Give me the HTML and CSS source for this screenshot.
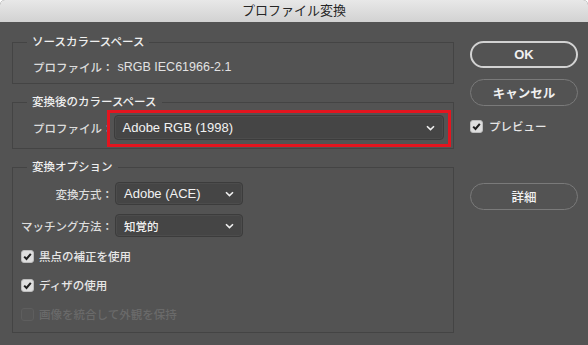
FILE: index.html
```html
<!DOCTYPE html>
<html>
<head>
    <title>プロファイル変換</title>
    <link rel="stylesheet" href="styles.css">
</head>
<body>
    <div class="dialog">
        <div class="titlebar">プロファイル変換</div>

        <div class="dialog-body">
            <div class="main">
                <fieldset class="group">
                    <legend>ソースカラースペース</legend>
                    <div class="group-body source-body">
                        <span class="label">プロファイル：</span>
                        <span class="value">sRGB IEC61966-2.1</span>
                    </div>
                </fieldset>

                <fieldset class="group">
                    <legend>変換後のカラースペース</legend>
                    <div class="group-body dest-body">
                        <span class="label">プロファイル：</span>
                        <div class="highlight">
                            <div class="select select-wide">
                                <span>Adobe RGB (1998)</span>
                                <svg class="chevron" width="9" height="6" viewBox="0 0 9 6"><path d="M1 1.2 L4.5 4.6 L8 1.2" fill="none" stroke="#f0f0f0" stroke-width="1.6"/></svg>
                            </div>
                        </div>
                    </div>
                </fieldset>

                <fieldset class="group">
                    <legend>変換オプション</legend>
                    <div class="group-body options-body">
                        <div class="option-grid">
                            <span class="label">変換方式：</span>
                            <div class="select">
                                <span>Adobe (ACE)</span>
                                <svg class="chevron" width="9" height="6" viewBox="0 0 9 6"><path d="M1 1.2 L4.5 4.6 L8 1.2" fill="none" stroke="#f0f0f0" stroke-width="1.6"/></svg>
                            </div>
                            <span class="label">マッチング方法：</span>
                            <div class="select">
                                <span class="ja">知覚的</span>
                                <svg class="chevron" width="9" height="6" viewBox="0 0 9 6"><path d="M1 1.2 L4.5 4.6 L8 1.2" fill="none" stroke="#f0f0f0" stroke-width="1.6"/></svg>
                            </div>
                        </div>

                        <div class="check-row">
                            <span class="check on">
                                <svg width="11" height="11" viewBox="0 0 11 11"><path d="M2.2 5.6 L4.5 8 L8.8 2.8" fill="none" stroke="#1e1e1e" stroke-width="2"/></svg>
                            </span>
                            黒点の補正を使用
                        </div>
                        <div class="check-row">
                            <span class="check on">
                                <svg width="11" height="11" viewBox="0 0 11 11"><path d="M2.2 5.6 L4.5 8 L8.8 2.8" fill="none" stroke="#1e1e1e" stroke-width="2"/></svg>
                            </span>
                            ディザの使用
                        </div>
                        <div class="check-row disabled">
                            <span class="check"></span>
                            画像を統合して外観を保持
                        </div>
                    </div>
                </fieldset>
            </div>

            <div class="side">
                <button class="btn btn-default">OK</button>
                <button class="btn">キャンセル</button>
                <div class="check-row preview">
                    <span class="check on">
                        <svg width="11" height="11" viewBox="0 0 11 11"><path d="M2.2 5.6 L4.5 8 L8.8 2.8" fill="none" stroke="#1e1e1e" stroke-width="2"/></svg>
                    </span>
                    プレビュー
                </div>
                <button class="btn btn-more">詳細</button>
            </div>
        </div>
    </div>
</body>
</html>
```

FILE: styles.css
```css
body {
    margin: 0;
    background-color: #ffffff;
    font-family: 'Liberation Sans', 'Noto Sans CJK JP', sans-serif;
}

.dialog {
    width: 588px;
    height: 345px;
    background-color: #535353;
    border-radius: 5px 5px 0 0;
    overflow: hidden;
}

.titlebar {
    height: 22px;
    line-height: 22px;
    text-align: center;
    font-size: 13px;
    color: #262626;
    background: linear-gradient(#e8e8e8, #d2d2d2);
}

.dialog-body {
    display: flex;
    padding: 12px 0 0 12px;
}

.main {
    width: 442px;
    display: flex;
    flex-direction: column;
    gap: 10px;
}

/* group boxes */
.group {
    margin: 0;
    padding: 0;
    min-width: 0;
    border: 1px solid #444444;
}

.group legend {
    margin-left: 14px;
    padding: 0 5px;
    line-height: 16px;
    font-size: 11.5px;
    font-weight: 500;
    color: #efefef;
}

.label {
    font-size: 11.5px;
    font-weight: 500;
    color: #dcdcdc;
    white-space: nowrap;
}

.value {
    font-size: 12.5px;
    color: #e2e2e2;
    margin-left: 4px;
}

.source-body {
    display: flex;
    align-items: center;
    height: 20px;
    padding: 7px 0 6px 20px;
}

.dest-body {
    display: flex;
    align-items: center;
    padding: 5px 9px 8px 20px;
}

.options-body {
    display: flex;
    flex-direction: column;
    gap: 9px;
    padding: 7px 0 8px 8px;
}

/* selects */
.select {
    display: flex;
    align-items: center;
    justify-content: space-between;
    box-sizing: border-box;
    height: 23px;
    padding: 0 8px 0 8px;
    background-color: #454545;
    border: 1px solid #3c3c3c;
    border-radius: 4px;
    box-shadow: inset 0 0 0 1px rgba(255, 255, 255, 0.04);
    font-size: 13px;
    color: #f2f2f2;
}

.select .ja {
    font-size: 11.5px;
    font-weight: 500;
}

.chevron {
    display: block;
}

.highlight {
    position: relative;
    flex: 1;
}

.highlight::after {
    content: '';
    position: absolute;
    top: -5px;
    bottom: -7px;
    left: -7px;
    right: -7px;
    border: 3px solid #e3151f;
    pointer-events: none;
}

.select-wide {
    height: 25px;
}

.option-grid {
    display: grid;
    grid-template-columns: auto 128px;
    justify-content: start;
    column-gap: 2px;
    row-gap: 9px;
    align-items: center;
}

.option-grid .label {
    justify-self: end;
}

/* checkboxes */
.check-row {
    display: flex;
    align-items: center;
    gap: 5px;
    height: 20px;
    font-size: 11.5px;
    font-weight: 500;
    color: #e6e6e6;
}

.check {
    display: flex;
    align-items: center;
    justify-content: center;
    box-sizing: border-box;
    width: 13px;
    height: 13px;
    border-radius: 3px;
    border: 1px solid #5e5e5e;
    background-color: #555555;
}

.check.on {
    background-color: #dedede;
    border-color: #bdbdbd;
}

.check-row.disabled {
    color: #6a6a6a;
}

/* right column */
.side {
    width: 108px;
    margin-left: 16px;
    padding-top: 7px;
    display: flex;
    flex-direction: column;
}

.btn {
    box-sizing: border-box;
    height: 27px;
    border-radius: 14px;
    background: transparent;
    border: 1.5px solid #7a7a7a;
    color: #f0f0f0;
    font-family: inherit;
    font-size: 12.5px;
    font-weight: bold;
    padding: 0;
    margin-bottom: 11px;
}

.btn-default {
    border: 2px solid #d2d2d2;
    font-size: 13px;
}

.preview {
    height: 18px;
    gap: 6px;
    margin-bottom: 48px;
}

.btn-more {
    font-weight: 500;
}
```
